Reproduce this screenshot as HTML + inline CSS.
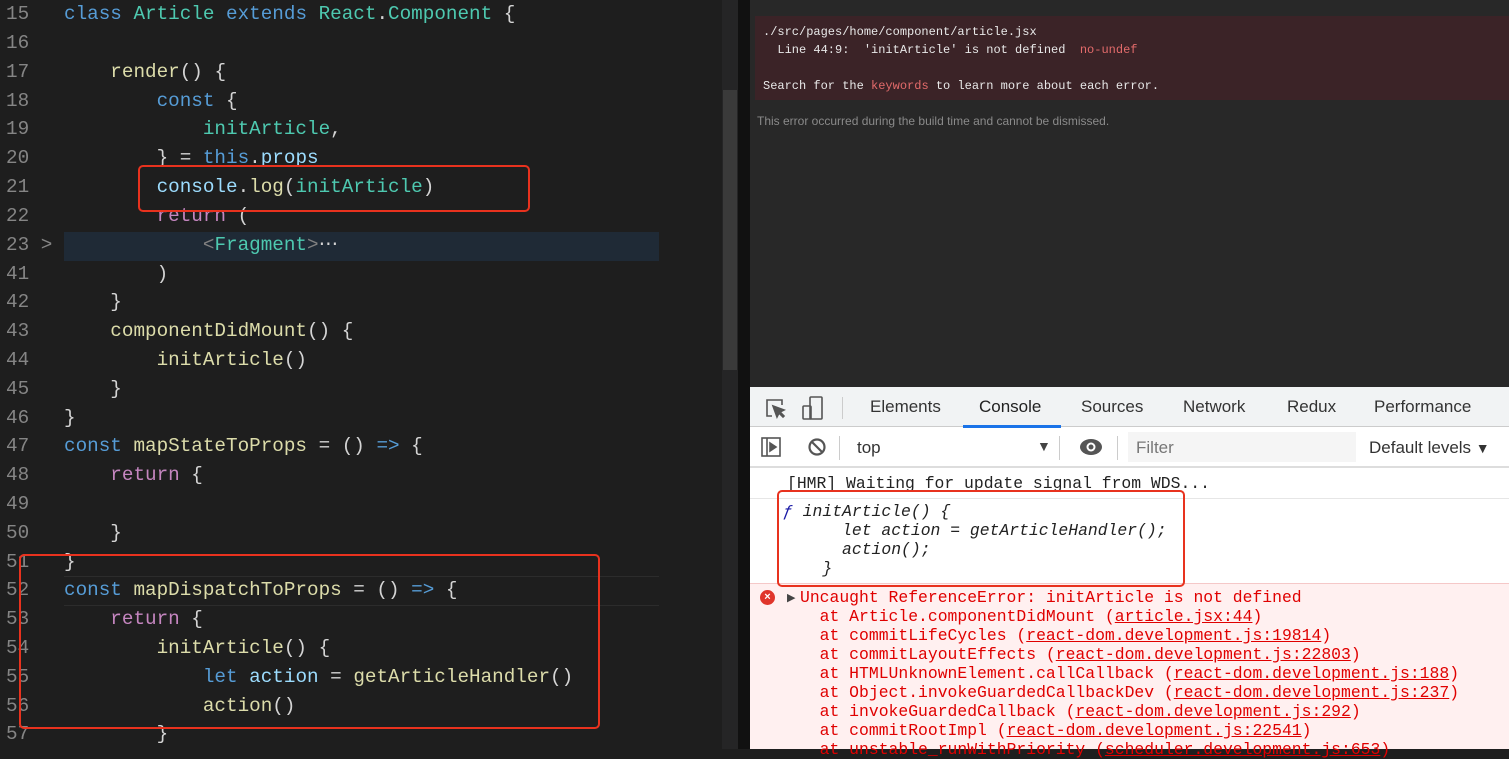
<!DOCTYPE html>
<html><head><meta charset="utf-8"><style>
*{margin:0;padding:0;box-sizing:border-box}
body{width:1509px;height:749px;overflow:hidden;background:#1e1e1e;position:relative;font-family:"Liberation Sans",sans-serif}
#ed{position:absolute;left:0;top:0;width:722px;height:749px;background:#1e1e1e;font-family:"Liberation Mono",monospace;font-size:19.3px;overflow:hidden}
.ln{position:absolute;left:0;height:29px;line-height:29px;white-space:pre;width:720px}
.n{position:absolute;left:6px;color:#858585;width:40px}
.c{position:absolute;left:64px;color:#d4d4d4}
.k{color:#569cd6}.t{color:#4ec9b0}.f{color:#dcdcaa}.v{color:#9cdcfe}.p{color:#c586c0}.g{color:#808080}
.box{position:absolute;border:2.5px solid #e8321e;border-radius:5px}
#sb{position:absolute;left:722px;top:0;width:16px;height:749px;background:#252526}
#div{position:absolute;left:738px;top:0;width:12px;height:749px;background:#111}
#rt{position:absolute;left:750px;top:0;width:759px;height:387px;background:#282828}
#err{position:absolute;left:5px;top:16px;width:754px;height:84px;background:#3b2327;font-family:"Liberation Mono",monospace;font-size:12px;color:#e8e8e8;padding:7px 8px;line-height:18px;white-space:pre}
#dt{position:absolute;left:750px;top:387px;width:759px;height:362px;background:#fff;font-size:17px;color:#333}
.mono{font-family:"Liberation Mono",monospace;font-size:16.4px;white-space:pre;position:absolute;line-height:19px}
</style></head><body>
<div id="ed">
<div style="position:absolute;left:64px;top:232px;width:595px;height:29px;background:#1f2a36"></div>
<div style="position:absolute;left:64px;top:576px;width:595px;height:30px;border-top:1px solid #2c2c2c;border-bottom:1px solid #2c2c2c"></div>
<div class="ln" style="top:0"><span class="n">15</span><span class="c"><span class="k">class</span> <span class="t">Article</span> <span class="k">extends</span> <span class="t">React</span>.<span class="t">Component</span> {</span></div>
<div class="ln" style="top:29px"><span class="n">16</span></div>
<div class="ln" style="top:58px"><span class="n">17</span><span class="c">    <span class="f">render</span>() {</span></div>
<div class="ln" style="top:87px"><span class="n">18</span><span class="c">        <span class="k">const</span> {</span></div>
<div class="ln" style="top:115px"><span class="n">19</span><span class="c">            <span class="t">initArticle</span>,</span></div>
<div class="ln" style="top:144px"><span class="n">20</span><span class="c">        } = <span class="k">this</span>.<span class="v">props</span></span></div>
<div class="ln" style="top:173px"><span class="n">21</span><span class="c">        <span class="v">console</span>.<span class="f">log</span>(<span class="t">initArticle</span>)</span></div>
<div class="ln" style="top:202px"><span class="n">22</span><span class="c">        <span class="p">return</span> (</span></div>
<div class="ln" style="top:231px"><span class="n">23 &gt;</span><span class="c">            <span class="g">&lt;</span><span class="t">Fragment</span><span class="g">&gt;</span>⋯</span></div>
<div class="ln" style="top:260px"><span class="n">41</span><span class="c">        )</span></div>
<div class="ln" style="top:288px"><span class="n">42</span><span class="c">    }</span></div>
<div class="ln" style="top:317px"><span class="n">43</span><span class="c">    <span class="f">componentDidMount</span>() {</span></div>
<div class="ln" style="top:346px"><span class="n">44</span><span class="c">        <span class="f">initArticle</span>()</span></div>
<div class="ln" style="top:375px"><span class="n">45</span><span class="c">    }</span></div>
<div class="ln" style="top:404px"><span class="n">46</span><span class="c">}</span></div>
<div class="ln" style="top:432px"><span class="n">47</span><span class="c"><span class="k">const</span> <span class="f">mapStateToProps</span> = () <span class="k">=&gt;</span> {</span></div>
<div class="ln" style="top:461px"><span class="n">48</span><span class="c">    <span class="p">return</span> {</span></div>
<div class="ln" style="top:490px"><span class="n">49</span></div>
<div class="ln" style="top:519px"><span class="n">50</span><span class="c">    }</span></div>
<div class="ln" style="top:548px"><span class="n">51</span><span class="c">}</span></div>
<div class="ln" style="top:576px"><span class="n">52</span><span class="c"><span class="k">const</span> <span class="f">mapDispatchToProps</span> = () <span class="k">=&gt;</span> {</span></div>
<div class="ln" style="top:605px"><span class="n">53</span><span class="c">    <span class="p">return</span> {</span></div>
<div class="ln" style="top:634px"><span class="n">54</span><span class="c">        <span class="f">initArticle</span>() {</span></div>
<div class="ln" style="top:663px"><span class="n">55</span><span class="c">            <span class="k">let</span> <span class="v">action</span> = <span class="f">getArticleHandler</span>()</span></div>
<div class="ln" style="top:692px"><span class="n">56</span><span class="c">            <span class="f">action</span>()</span></div>
<div class="ln" style="top:720px"><span class="n">57</span><span class="c">        }</span></div>
<div class="box" style="left:138px;top:165px;width:392px;height:47px"></div>
<div class="box" style="left:19px;top:554px;width:581px;height:175px"></div>
</div>
<div id="sb"><div style="position:absolute;left:1px;top:90px;width:14px;height:280px;background:#3a3a3a"></div></div>
<div id="div"></div>
<div id="rt">
<div id="err">./src/pages/home/component/article.jsx
  Line 44:9:  'initArticle' is not defined  <span style="color:#e36b6b">no-undef</span>

Search for the <span style="color:#e36b6b">keywords</span> to learn more about each error.</div>
<div style="position:absolute;left:7px;top:114px;font-size:12px;color:#8a8a8a">This error occurred during the build time and cannot be dismissed.</div>
</div>
<div id="dt">
<div style="position:absolute;left:0;top:0;width:759px;height:40px;background:#f1f3f4;border-bottom:1px solid #ccc"></div>
<svg style="position:absolute;left:14px;top:10px" width="22" height="22" viewBox="0 0 22 22" fill="none" stroke="#555" stroke-width="1.6"><path d="M8 19H3V3h15v5"/><path d="M9 9l4 11 2-4 4 4 1-1-4-4 4-2z" fill="#555"/></svg>
<svg style="position:absolute;left:51px;top:8px" width="24" height="26" viewBox="0 0 24 26" fill="none" stroke="#555" stroke-width="1.6"><rect x="9" y="2" width="12" height="22" rx="1"/><rect x="2" y="11" width="8" height="13" rx="1"/></svg>
<div style="position:absolute;left:92px;top:10px;width:1px;height:22px;background:#ccc"></div>
<div style="position:absolute;left:120px;top:10px">Elements</div>
<div style="position:absolute;left:229px;top:10px;color:#222">Console</div>
<div style="position:absolute;left:213px;top:38px;width:98px;height:3px;background:#1a73e8"></div>
<div style="position:absolute;left:331px;top:10px">Sources</div>
<div style="position:absolute;left:433px;top:10px">Network</div>
<div style="position:absolute;left:537px;top:10px">Redux</div>
<div style="position:absolute;left:624px;top:10px">Performance</div>
<div style="position:absolute;left:0;top:40px;width:759px;height:41px;border-bottom:2px solid #ddd"></div>
<svg style="position:absolute;left:11px;top:50px" width="20" height="20" viewBox="0 0 20 20" fill="none" stroke="#555" stroke-width="1.6"><rect x="1" y="1" width="18" height="18"/><path d="M6 1v18"/><path d="M9 6l6 4-6 4z" fill="#555"/></svg>
<svg style="position:absolute;left:57px;top:50px" width="20" height="20" viewBox="0 0 20 20" fill="none" stroke="#555" stroke-width="2.2"><circle cx="10" cy="10" r="7.5"/><path d="M5 5l10 10"/></svg>
<div style="position:absolute;left:89px;top:49px;width:1px;height:24px;background:#ccc"></div>
<div style="position:absolute;left:107px;top:51px">top</div>
<div style="position:absolute;left:287px;top:51px;font-size:14px;color:#444">▼</div>
<div style="position:absolute;left:309px;top:49px;width:1px;height:24px;background:#ccc"></div>
<svg style="position:absolute;left:329px;top:51px" width="24" height="18" viewBox="0 0 24 18"><ellipse cx="12" cy="9" rx="11" ry="8" fill="#555"/><circle cx="12" cy="9" r="4.5" fill="#fff"/><circle cx="12" cy="9" r="2.5" fill="#555"/></svg>
<div style="position:absolute;left:367px;top:49px;width:1px;height:24px;background:#ccc"></div>
<div style="position:absolute;left:378px;top:45px;width:228px;height:30px;background:#f5f5f5"></div>
<div style="position:absolute;left:386px;top:51px;color:#777">Filter</div>
<div style="position:absolute;left:619px;top:51px">Default levels <span style="font-size:14px">▼</span></div>
<div class="mono" style="left:37px;top:87px;color:#222">[HMR] Waiting for update signal from WDS...</div>
<div style="position:absolute;left:0;top:111px;width:759px;height:1px;background:#e6e6e6"></div>
<div class="mono" style="left:33px;top:115px;color:#222;font-style:italic"><span style="color:#1a1aa6">ƒ</span> initArticle() {
      let action = getArticleHandler();
      action();
    }</div>
<div style="position:absolute;left:0;top:196px;width:759px;height:166px;background:#fff0f0;border-top:1px solid #f5c8c8"></div>
<div style="position:absolute;left:10px;top:203px;width:15px;height:15px;border-radius:50%;background:#e0352b;color:#fff;font-size:11px;line-height:15px;text-align:center;font-weight:bold">×</div>
<div style="position:absolute;left:37px;top:204px;font-size:11px;color:#444">▶</div>
<div class="mono" style="left:50px;top:201px;color:#e00000">Uncaught ReferenceError: initArticle is not defined
  at Article.componentDidMount (<u>article.jsx:44</u>)
  at commitLifeCycles (<u>react-dom.development.js:19814</u>)
  at commitLayoutEffects (<u>react-dom.development.js:22803</u>)
  at HTMLUnknownElement.callCallback (<u>react-dom.development.js:188</u>)
  at Object.invokeGuardedCallbackDev (<u>react-dom.development.js:237</u>)
  at invokeGuardedCallback (<u>react-dom.development.js:292</u>)
  at commitRootImpl (<u>react-dom.development.js:22541</u>)
  at unstable_runWithPriority (<u>scheduler.development.js:653</u>)</div>
<div class="box" style="left:27px;top:103px;width:408px;height:97px"></div>
</div>
</body></html>
